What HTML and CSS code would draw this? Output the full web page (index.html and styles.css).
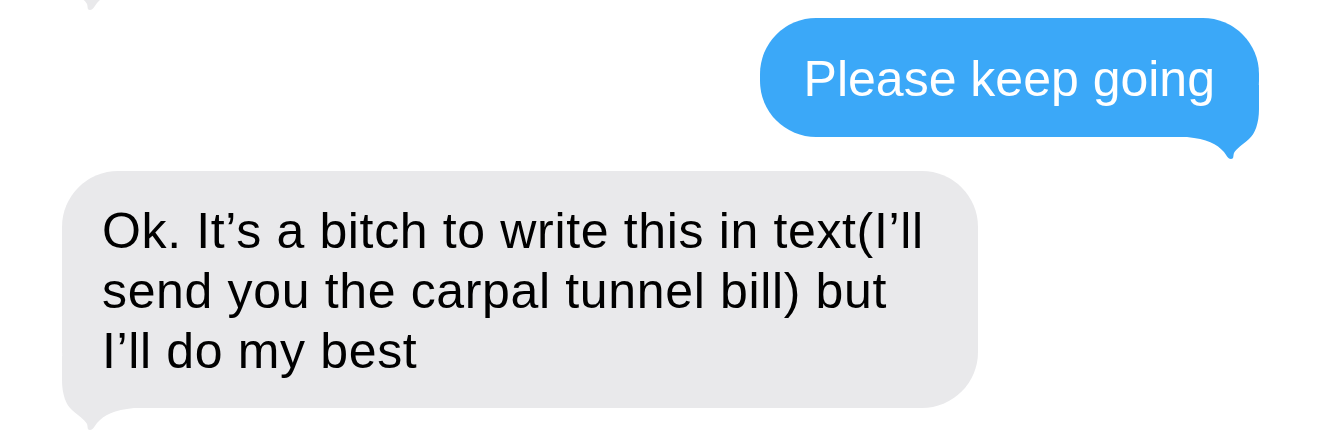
FILE: index.html
```html
<!DOCTYPE html>
<html lang="en">
<head>
    <meta charset="UTF-8">
    <meta name="viewport" content="width=device-width, initial-scale=1.0">
    <title>Messages</title>
    <link rel="stylesheet" href="styles.css">
</head>
<body>
    <div class="thread">
        <!-- tail of the previous message, scrolled mostly out of view -->
        <div class="bubble received earlier" aria-hidden="true">
            <svg class="tail" viewBox="0 -52 76 76"><path d="M0,-52 L0,-28 C0,-14 4,-3 10,2 C17,8 23,12 25,16 C26,19 25,22 28,22 C31,22 32,19 35,15 C42,7 52,2 72,0 L72,-52 Z"/></svg>
        </div>

        <div class="bubble sent">
            Please keep going
            <svg class="tail" viewBox="0 -52 76 76"><path d="M0,-52 L0,-28 C0,-14 4,-3 10,2 C17,8 23,12 25,16 C26,19 25,22 28,22 C31,22 32,19 35,15 C42,7 52,2 72,0 L72,-52 Z"/></svg>
        </div>

        <div class="bubble received">
            Ok. It’s a bitch to write this in text(I’ll<br>
            send you the carpal tunnel bill) but<br>
            I’ll do my best
            <svg class="tail" viewBox="0 -52 76 76"><path d="M0,-52 L0,-28 C0,-14 4,-3 10,2 C17,8 23,12 25,16 C26,19 25,22 28,22 C31,22 32,19 35,15 C42,7 52,2 72,0 L72,-52 Z"/></svg>
        </div>
    </div>
</body>
</html>
```

FILE: styles.css
```css
body {
    margin: 0;
    background-color: #fff;
    font-family: "Liberation Sans", Arial, sans-serif;
}

.thread {
    display: flex;
    flex-direction: column;
    align-items: flex-start;
    padding-bottom: 27px;
}

.bubble {
    position: relative;
    z-index: 0;
    font-size: 50px;
    line-height: 60px;
    border-radius: 56px;
}

.bubble .tail {
    position: absolute;
    z-index: -1;
    bottom: -24px;
    width: 76px;
    height: 76px;
}

.sent {
    align-self: flex-end;
    margin-top: 30px;
    margin-right: 61px;
    padding: 31px 44px 28px 44px;
    background-color: #3ba8f8;
    color: #fff;
}

.sent .tail {
    right: 0;
    transform: scaleX(-1);
    fill: #3ba8f8;
}

.received {
    width: 916px;
    box-sizing: border-box;
    margin-top: 34px;
    margin-left: 62px;
    padding: 30px 40px 27px 40px;
    background-color: #e9e9eb;
    color: #000;
    letter-spacing: 0.65px;
}

.received .tail {
    left: 0;
    fill: #e9e9eb;
}

.earlier {
    height: 60px;
    margin-top: -72px;
    padding: 0;
}
```
